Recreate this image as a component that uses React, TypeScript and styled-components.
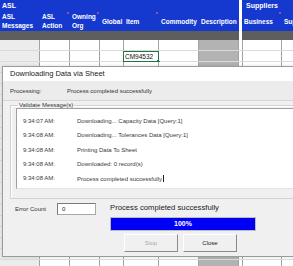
import styled, { createGlobalStyle } from "styled-components"

const BLUE = "#1539cf"
const BAND = "#5e5e5e"
const LINE = "#a3a3a3"
const FACE = "#f0f0f0"
const FONT = `"Liberation Sans", Arial, sans-serif`

const GlobalStyle = createGlobalStyle`
    html, body {
        margin: 0;
        padding: 0;
        width: 293px;
        height: 266px;
        overflow: hidden;
        background: #ffffff;
        font-family: ${FONT};
    }
`

const Page = styled.div`
    position: relative;
    width: 293px;
    height: 266px;
    overflow: hidden;
`

/* ---------- spreadsheet behind the dialog ---------- */

const HeaderBand = styled.div`
    display: flex;
    gap: 3px;
    background: #ffffff;
`

const Section = styled.div<{ $width?: number }>`
    display: flex;
    flex-direction: column;
    width: ${p => (p.$width ? `${p.$width}px` : "auto")};
    flex: ${p => (p.$width ? "0 0 auto" : "1 0 auto")};
`

const SectionTitle = styled.div<{ $pad: number }>`
    height: 11px;
    line-height: 12px;
    padding-left: ${p => p.$pad}px;
    background: ${BLUE};
    color: #ffffff;
    font-size: 7px;
    font-weight: 700;
`

const ColumnRow = styled.div`
    display: flex;
    height: 20px;
    background: ${BLUE};
`

const ColumnHead = styled.div<{ $width: number; $flag?: boolean }>`
    position: relative;
    width: ${p => p.$width}px;
    flex: 0 0 auto;
    display: flex;
    align-items: center;
    padding-left: 2px;
    box-sizing: border-box;
    color: #ffffff;
    font-size: 6.5px;
    font-weight: 700;
    line-height: 9px;

    &::before {
        content: "";
        display: ${p => (p.$flag ? "block" : "none")};
        position: absolute;
        left: -3px;
        top: 1px;
        width: 2px;
        height: 2px;
        border-radius: 1px;
        background: #e0489c;
    }
`

const GrayBand = styled.div`
    height: 9px;
    background: ${BAND};
`

const GridRow = styled.div`
    display: flex;
    height: 11px;
    border-bottom: 1px solid #dadada;
    box-sizing: border-box;
`

const Cell = styled.div<{ $width: number; $tone?: "light" | "dark" | "none" }>`
    position: relative;
    width: ${p => p.$width}px;
    flex: 0 0 auto;
    box-sizing: border-box;
    border-right: 1px solid ${p => (p.$tone === "none" ? "#ffffff" : LINE)};
    background: ${p =>
        p.$tone === "light" ? "#ececec" : p.$tone === "dark" ? "#b3b3b3" : "#ffffff"};
`

const ActiveCell = styled.div`
    position: absolute;
    inset: 0 -1px -1px -1px;
    border: 1px solid #217346;
    background: #ffffff;
    font-size: 6.5px;
    line-height: 9px;
    color: #111111;
    padding-left: 1px;

    &::after {
        content: "";
        position: absolute;
        right: -2px;
        bottom: -2px;
        width: 3px;
        height: 3px;
        background: #217346;
    }
`

/* ---------- dialog ---------- */

const Dialog = styled.div`
    position: absolute;
    left: 2px;
    top: 66px;
    width: 320px;
    height: 191px;
    box-sizing: border-box;
    border: 1px solid #9c9c9c;
    background: ${FACE};
    display: flex;
    flex-direction: column;
    color: #222222;
    box-shadow: 0 0 3px rgba(0, 0, 0, 0.15);
`

const TitleBar = styled.div`
    height: 14px;
    padding-left: 7px;
    background: #ffffff;
    font-size: 7.5px;
    line-height: 13px;
    color: #1a1a1a;
`

const StatusRow = styled.div`
    display: flex;
    height: 19px;
    align-items: center;
    padding-left: 7px;
    background: #ececec;
    border-bottom: 1px solid #d6d6d6;
    font-size: 6px;
    color: #333333;
`

const StatusLabel = styled.span`
    width: 57px;
`

const GroupBox = styled.fieldset`
    margin: 1px 0 0 7px;
    padding: 0 0 7px 5px;
    border: 1px solid #d2d2d2;
    border-right: none;
    box-shadow: inset 1px 1px 0 #ffffff;
    min-width: 0;
    height: 88px;
    box-sizing: content-box;
`

const GroupLegend = styled.legend`
    margin-left: 2px;
    padding: 0 1px;
    font-size: 6px;
    line-height: 6px;
    color: #333333;
`

const ListBox = styled.div`
    height: 81px;
    box-sizing: border-box;
    margin-top: 0;
    padding: 5px 0 0 6px;
    background: #ffffff;
    border-top: 1px solid #a0a0a0;
    border-left: 1px solid #a0a0a0;
    border-bottom: 1px solid #e3e3e3;
`

const LogLine = styled.div`
    display: flex;
    height: 14.25px;
    align-items: center;
    font-size: 6px;
    color: #3a3a3a;
`

const LogTime = styled.span`
    width: 54px;
    flex: 0 0 auto;
`

const Caret = styled.span`
    display: inline-block;
    width: 1px;
    height: 7px;
    margin-left: 1px;
    vertical-align: -1px;
    background: #222222;
`

const Footer = styled.div`
    display: flex;
    padding: 4px 0 0 12px;
`

const ErrorBlock = styled.div`
    display: flex;
    align-items: flex-start;
    width: 84px;
    flex: 0 0 auto;
`

const ErrorLabel = styled.span`
    width: 42px;
    font-size: 6px;
    line-height: 12px;
    color: #333333;
`

const NumberBox = styled.div`
    width: 39px;
    height: 12px;
    box-sizing: border-box;
    padding-left: 4px;
    background: #ffffff;
    border: 1px solid #a8a8a8;
    border-top-color: #7a7a7a;
    border-left-color: #7a7a7a;
    font-size: 6px;
    line-height: 10px;
`

const ProgressBlock = styled.div`
    margin-left: 11px;
    display: flex;
    flex-direction: column;
`

const ProgressLabel = styled.div`
    height: 10px;
    font-size: 7.7px;
    line-height: 10px;
    color: #222222;
`

const ProgressBar = styled.div`
    margin-top: 4px;
    width: 146px;
    height: 14px;
    box-sizing: border-box;
    border: 1px solid #bcbcbc;
    background: #e6e6e6;
`

const ProgressFill = styled.div`
    height: 100%;
    background: #0000f5;
    color: #ffffff;
    font-size: 7px;
    font-weight: 700;
    line-height: 12px;
    text-align: center;
`

const ButtonRow = styled.div`
    display: flex;
    gap: 5px;
    margin-top: 3px;
    padding-left: 14px;
`

const Button = styled.div<{ $disabled?: boolean }>`
    width: 54px;
    height: 18px;
    box-sizing: border-box;
    border: 1px solid;
    border-color: #ffffff #8a8a8a #8a8a8a #ffffff;
    background: ${FACE};
    font-size: 6px;
    line-height: 16px;
    text-align: center;
    color: ${p => (p.$disabled ? "#a8a8a8" : "#222222")};
`

const asl = [
    { w: 40, label: ["ASL", "Messages"] },
    { w: 30, label: ["ASL", "Action"] },
    { w: 30, label: ["Owning", "Org"], flag: true },
    { w: 24, label: ["Global"], flag: true },
    { w: 35, label: ["Item"] },
    { w: 40, label: ["Commodity"], flag: true },
    { w: 40, label: ["Description"] },
]

const suppliers = [
    { w: 40, label: ["Business"] },
    { w: 30, label: ["Sup"], flag: true },
]

const gridCols: { w: number; tone?: "light" | "dark" | "none" }[] = [
    { w: 40, tone: "light" },
    { w: 30 },
    { w: 30 },
    { w: 24 },
    { w: 35 },
    { w: 40 },
    { w: 40, tone: "dark" },
    { w: 4 },
    { w: 39 },
    { w: 40 },
]

const log = [
    ["9:34:07 AM:", "Downloading... Capacity Data [Query:1]"],
    ["9:34:08 AM:", "Downloading... Tolerances Data [Query:1]"],
    ["9:34:08 AM:", "Printing Data To Sheet"],
    ["9:34:08 AM:", "Downloaded: 0 record(s)"],
    ["9:34:08 AM:", "Process completed successfully"],
]

const App = () => {
    return (
        <>
            <GlobalStyle />
            <Page>
                <HeaderBand>
                    <Section $width={239}>
                        <SectionTitle $pad={2}>ASL</SectionTitle>
                        <ColumnRow>
                            {asl.map((c, i) => (
                                <ColumnHead key={i} $width={c.w} $flag={c.flag}>
                                    <span>
                                        {c.label.map((l, j) => (
                                            <div key={j}>{l}</div>
                                        ))}
                                    </span>
                                </ColumnHead>
                            ))}
                        </ColumnRow>
                        <GrayBand />
                    </Section>
                    <Section>
                        <SectionTitle $pad={4}>Suppliers</SectionTitle>
                        <ColumnRow>
                            {suppliers.map((c, i) => (
                                <ColumnHead key={i} $width={c.w} $flag={c.flag}>
                                    {c.label[0]}
                                </ColumnHead>
                            ))}
                        </ColumnRow>
                        <GrayBand />
                    </Section>
                </HeaderBand>

                {Array.from({ length: 21 }).map((_, r) => (
                    <GridRow key={r}>
                        {gridCols.map((c, i) => (
                            <Cell key={i} $width={c.w} $tone={c.tone}>
                                {r === 1 && i === 4 && <ActiveCell>CM94532</ActiveCell>}
                            </Cell>
                        ))}
                    </GridRow>
                ))}

                <Dialog>
                    <TitleBar>Downloading Data via Sheet</TitleBar>
                    <StatusRow>
                        <StatusLabel>Processing:</StatusLabel>
                        <span>Process completed successfully</span>
                    </StatusRow>
                    <GroupBox>
                        <GroupLegend>Validate Message(s)</GroupLegend>
                        <ListBox>
                            {log.map(([time, text], i) => (
                                <LogLine key={i}>
                                    <LogTime>{time}</LogTime>
                                    <span>
                                        {text}
                                        {i === log.length - 1 && <Caret />}
                                    </span>
                                </LogLine>
                            ))}
                        </ListBox>
                    </GroupBox>
                    <Footer>
                        <ErrorBlock>
                            <ErrorLabel>Error Count</ErrorLabel>
                            <NumberBox>0</NumberBox>
                        </ErrorBlock>
                        <ProgressBlock>
                            <ProgressLabel>Process completed successfully</ProgressLabel>
                            <ProgressBar>
                                <ProgressFill style={{ width: "100%" }}>100%</ProgressFill>
                            </ProgressBar>
                            <ButtonRow>
                                <Button $disabled>Stop</Button>
                                <Button>Close</Button>
                            </ButtonRow>
                        </ProgressBlock>
                    </Footer>
                </Dialog>
            </Page>
        </>
    )
}

export default App
